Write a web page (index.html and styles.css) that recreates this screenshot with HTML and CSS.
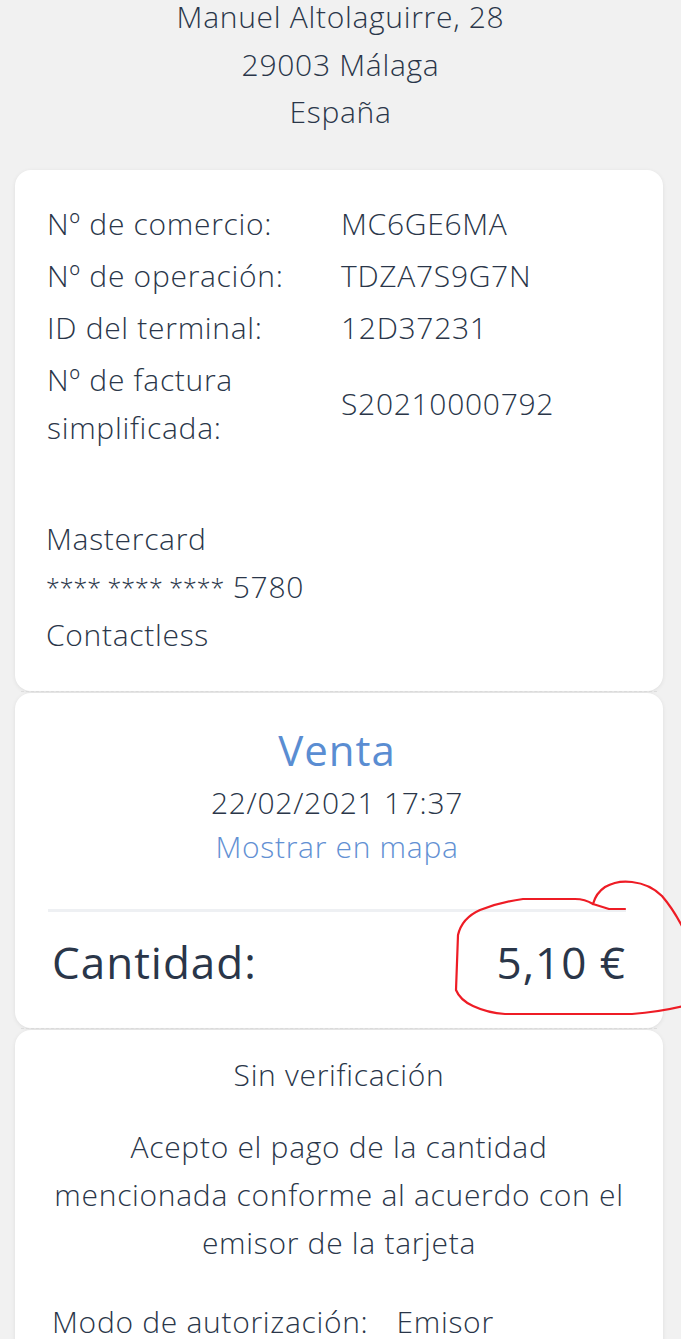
FILE: index.html
```html
<!DOCTYPE html>
<html lang="es">
<head>
<meta charset="utf-8">
<title>Recibo</title>
<link rel="stylesheet" href="styles.css">
</head>
<body>
<div class="page">
  <header class="address">
    <div class="addr-first">Manuel Altolaguirre, 28</div>
    <div>29003 Málaga</div>
    <div>España</div>
  </header>

  <section class="card card-info">
    <div class="rows">
      <div class="label">Nº de comercio:</div><div class="value">MC6GE6MA</div>
      <div class="label">Nº de operación:</div><div class="value">TDZA7S9G7N</div>
      <div class="label">ID del terminal:</div><div class="value">12D37231</div>
      <div class="label">Nº de factura<br>simplificada:</div><div class="value">S20210000792</div>
    </div>
    <div class="cardinfo">
      <div>Mastercard</div>
      <div><span class="mask">**** **** ****</span> 5780</div>
      <div>Contactless</div>
    </div>
  </section>
  <div class="tear"></div>
  <section class="card card-sale">
    <div class="sale-type">Venta</div>
    <div class="sale-date">22/02/2021 17:37</div>
    <div class="sale-map">Mostrar en mapa</div>
    <div class="divider"></div>
    <div class="amount-row">
      <span class="amount-label">Cantidad:</span>
      <span class="amount-value">5,10 €</span>
    </div>
  </section>
  <div class="tear"></div>
  <section class="card card-verify">
    <div class="verify-title">Sin verificación</div>
    <p class="verify-text">Acepto el pago de la cantidad<br>mencionada conforme al acuerdo con el<br>emisor de la tarjeta</p>
    <div class="auth-row"><span class="auth-label">Modo de autorización:</span><span>Emisor</span></div>
  </section>

  <svg class="scribble" width="681" height="1339" viewBox="0 0 681 1339" aria-hidden="true">
    <path d="M625,909 L609,909 L593,904 Q596,893 605,887 Q617,880 632,882 Q650,884 662,896 Q674,910 684,930" />
    <path d="M593,904 Q585,899 575,899 L523,899 Q500,902 480,910 Q462,918 458,935 L456,990 Q460,1000 473,1006 Q488,1013 505,1014 L632,1014 Q660,1012 684,1006" />
  </svg>
</div>
</body>
</html>
```
FILE: styles.css
```css
html, body {
  margin: 0;
  padding: 0;
  background: #f1f1f1;
}
body {
  font-family: "Open Sans", "Lato", sans-serif;
  font-weight: 300;
  color: #2a3649;
  font-size: 30px;
  letter-spacing: 0.7px;
  overflow: hidden;
}
.page {
  position: relative;
  width: 681px;
  height: 1339px;
  overflow: hidden;
}
.address {
  text-align: center;
  line-height: 47.5px;
  margin-bottom: 34px;
}
.addr-first {
  line-height: 34px;
  margin-bottom: 6.5px;
}
.card {
  background: #fff;
  margin: 0 18px 0 15px;
  border-radius: 16px;
  box-shadow: 0 1px 4px rgba(0, 0, 0, 0.08);
}
.tear {
  margin: 0 24px 0 21px;
  border-top: 1px dashed #dcdcdc;
  height: 1px;
}
.card-info {
  padding: 30px 32px 32px 32px;
}
.rows {
  display: grid;
  grid-template-columns: 294px 1fr;
  row-gap: 4px;
  line-height: 48px;
}
.value {
  display: flex;
  align-items: center;
}
.cardinfo {
  margin-top: 63px;
  margin-left: -1px;
  line-height: 48px;
}
.mask {
  font-size: 25px;
  letter-spacing: 0;
  vertical-align: 1px;
}
.card-sale {
  padding: 29px 37px 16px 33px;
  text-align: center;
}
.sale-type {
  color: #5a8dd2;
  font-size: 42px;
  font-weight: 500;
  letter-spacing: 1px;
  line-height: 56px;
}
.sale-date {
  line-height: 44px;
  margin-top: 3px;
}
.sale-map {
  color: #6290d3;
  line-height: 44px;
}
.divider {
  height: 3px;
  background: #eef0f3;
  margin-top: 40px;
}
.amount-row {
  display: flex;
  justify-content: space-between;
  align-items: center;
  padding: 0 0 0 4px;
  height: 100px;
  font-size: 44px;
  font-weight: 400;
  letter-spacing: 1px;
}
.card-verify {
  padding: 21px 30px 60px 30px;
  text-align: center;
  border-radius: 16px 16px 0 0;
}
.verify-title {
  line-height: 48px;
}
.verify-text {
  margin: 24px 0 0 0;
  line-height: 48px;
}
.auth-row {
  text-align: left;
  margin-top: 31px;
  padding-left: 7px;
  line-height: 48px;
}
.auth-label {
  margin-right: 28px;
}
.scribble {
  position: absolute;
  left: 0;
  top: 0;
  pointer-events: none;
}
.scribble path {
  fill: none;
  stroke: #ee1c25;
  stroke-width: 2.2;
  stroke-linecap: round;
  stroke-linejoin: round;
}
```
